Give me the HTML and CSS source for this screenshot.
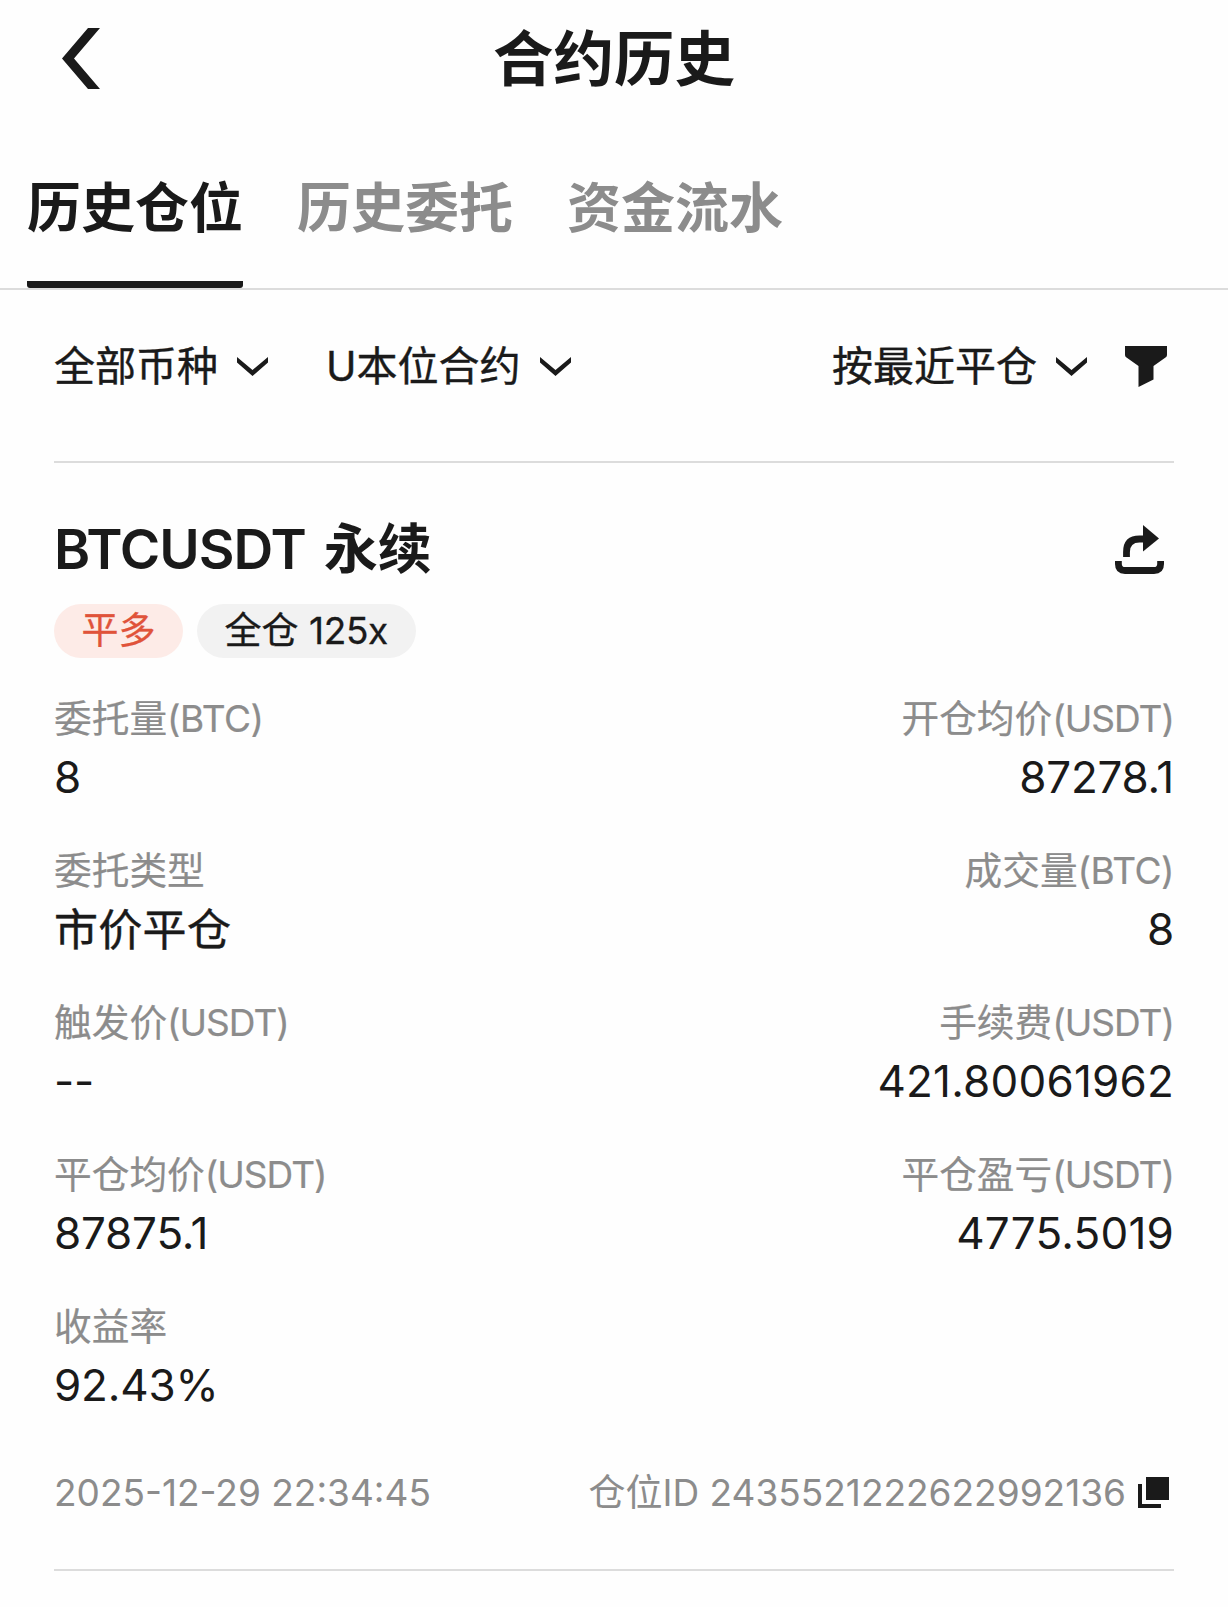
FILE: index.html
```html
<!DOCTYPE html>
<html lang="zh-CN">
<head>
    <meta charset="UTF-8">
    <meta name="viewport" content="width=device-width, initial-scale=1.0">
    <title>合约历史</title>
    <link rel="stylesheet" href="styles.css">
</head>
<body>
    <header class="header">
        <svg class="back" viewBox="0 0 38 61"><path d="M26 0H38L12 30.500 38 61H26L0 30.500Z"/></svg>
        <h1>合约历史</h1>
    </header>

    <nav class="tabs">
        <div class="tab active">历史仓位</div>
        <div class="tab">历史委托</div>
        <div class="tab">资金流水</div>
    </nav>

    <main class="content">
        <div class="filters">
            <div class="filter">
                <span>全部币种</span>
                <svg class="arrow" viewBox="0 0 31 19"><path d="M0 0L15.500 13 31 0V5.500L15.500 19 0 5.500Z"/></svg>
            </div>
            <div class="filter">
                <span>U本位合约</span>
                <svg class="arrow" viewBox="0 0 31 19"><path d="M0 0L15.500 13 31 0V5.500L15.500 19 0 5.500Z"/></svg>
            </div>
            <div class="filter sort">
                <span>按最近平仓</span>
                <svg class="arrow" viewBox="0 0 31 19"><path d="M0 0L15.500 13 31 0V5.500L15.500 19 0 5.500Z"/></svg>
            </div>
            <svg class="funnel" viewBox="0 0 42 41"><path d="M0 0H42V9Q42 10.500 40.500 11.500L28.500 20V33.500L13.500 41V20L1.500 11.500Q0 10.500 0 9Z"/></svg>
        </div>

        <section class="card">
            <div class="card-head">
                <h2><span class="symbol">BTCUSDT</span>永续</h2>
                <svg class="share" viewBox="0 0 49 49">
                    <path d="M11.500 32V27Q11.500 14 24.500 14H30" fill="none" stroke="currentColor" stroke-width="6.800"/>
                    <path d="M28 0L44 13.500 28 26.500Z"/>
                    <path d="M3.400 36V39Q3.400 45.500 10 45.500H39Q45.600 45.500 45.600 39V36" fill="none" stroke="currentColor" stroke-width="6.800"/>
                </svg>
            </div>
            <div class="badges">
                <span class="badge red">平多</span>
                <span class="badge">全仓 <span class="num">125x</span></span>
            </div>

            <div class="grid">
                <div class="item">
                    <div class="label">委托量<span class="unit">(BTC)</span></div>
                    <div class="value">8</div>
                </div>
                <div class="item right">
                    <div class="label">开仓均价<span class="unit usdt">(USDT)</span></div>
                    <div class="value">87278.1</div>
                </div>
                <div class="item">
                    <div class="label">委托类型</div>
                    <div class="value cn">市价平仓</div>
                </div>
                <div class="item right">
                    <div class="label">成交量<span class="unit">(BTC)</span></div>
                    <div class="value">8</div>
                </div>
                <div class="item">
                    <div class="label">触发价<span class="unit usdt">(USDT)</span></div>
                    <div class="value">--</div>
                </div>
                <div class="item right">
                    <div class="label">手续费<span class="unit usdt">(USDT)</span></div>
                    <div class="value wide">421.80061962</div>
                </div>
                <div class="item">
                    <div class="label">平仓均价<span class="unit usdt">(USDT)</span></div>
                    <div class="value">87875.1</div>
                </div>
                <div class="item right">
                    <div class="label">平仓盈亏<span class="unit usdt">(USDT)</span></div>
                    <div class="value wide">4775.5019</div>
                </div>
                <div class="item">
                    <div class="label">收益率</div>
                    <div class="value">92.43%</div>
                </div>
            </div>

            <div class="card-foot">
                <span class="time">2025-12-29 22:34:45</span>
                <span class="order">仓位ID 2435521222622992136</span>
                <svg class="copy" viewBox="0 0 31 31"><path d="M8 0H31V23H8ZM0 7H4V27H23V31H0Z"/></svg>
            </div>
        </section>
    </main>
</body>
</html>
```
FILE: styles.css
```css
* {
    box-sizing: border-box;
}
body {
    margin: 0;
    background: #fefefe;
    color: #1a1a1a;
    font-family: Inter, "Noto Sans CJK SC", sans-serif;
}
svg {
    display: block;
    flex: none;
    fill: currentColor;
}
h1, h2 {
    margin: 0;
}
.header {
    display: grid;
    grid-template-columns: 1fr auto 1fr;
    align-items: center;
    height: 117px;
    padding: 0 62px;
}
.back {
    width: 38px;
    height: 61px;
}
.header h1 {
    font-size: 60.500px;
    line-height: 80px;
    font-weight: 700;
}
.tabs {
    display: flex;
    gap: 54px;
    height: 173px;
    padding: 0 27px;
    border-bottom: 2px solid #dcdcdc;
}
.tab {
    height: 171px;
    padding-top: 52px;
    font-size: 54px;
    line-height: 80px;
    font-weight: 700;
    color: #8c8c8c;
}
.tab.active {
    color: #1a1a1a;
    border-bottom: 7px solid #1a1a1a;
    border-radius: 3px;
}
.content {
    padding: 0 54px;
}
.filters {
    display: flex;
    align-items: center;
    height: 173px;
    padding: 0 7px 19px 0;
    border-bottom: 2px solid #dcdcdc;
}
.filter {
    display: flex;
    align-items: center;
    gap: 19px;
    margin-right: 58px;
    font-size: 41px;
    line-height: 56px;
    -webkit-text-stroke: 0.400px;
}
.filter.sort {
    margin-left: auto;
    margin-right: 38px;
}
.arrow {
    width: 31px;
    height: 19px;
}
.funnel {
    width: 42px;
    height: 41px;
}
.card {
    border-bottom: 2px solid #dcdcdc;
}
.card-head {
    display: flex;
    justify-content: space-between;
    align-items: center;
    padding: 50px 10px 0 0;
}
.card-head h2 {
    font-size: 54px;
    line-height: 72px;
    font-weight: 700;
}
.symbol {
    margin-right: 18px;
    font-size: 55px;
    font-weight: 600;
    letter-spacing: -1px;
}
.share {
    width: 49px;
    height: 49px;
}
.badges {
    display: flex;
    gap: 14px;
    margin-top: 18px;
}
.badge {
    height: 54px;
    padding: 0 27.500px;
    border-radius: 27px;
    background: #f2f2f2;
    font-size: 37px;
    line-height: 53px;
    -webkit-text-stroke: 0.300px;
}
.badge.red {
    background: #fdebe7;
    color: #e0533a;
}
.num {
    letter-spacing: -0.300px;
}
.grid {
    display: grid;
    grid-template-columns: auto auto;
    justify-content: space-between;
    row-gap: 34px;
    margin-top: 32px;
}
.right {
    text-align: right;
}
.label {
    height: 57px;
    font-size: 37.700px;
    line-height: 56px;
    color: #8c8c8c;
    -webkit-text-stroke: 0.200px;
}
.unit {
    font-size: 37px;
    letter-spacing: -0.500px;
}
.unit.usdt {
    letter-spacing: -1px;
}
.value {
    height: 61px;
    font-size: 44px;
    line-height: 61px;
    letter-spacing: -0.200px;
}
.value.cn {
    line-height: 62px;
    letter-spacing: 0.300px;
    -webkit-text-stroke: 0.400px;
}
.value.wide {
    letter-spacing: 0.200px;
}
.card-foot {
    display: flex;
    align-items: center;
    height: 153px;
    padding-right: 5px;
    font-size: 37px;
    line-height: 50px;
    color: #8c8c8c;
}
.order {
    margin-left: auto;
}
.copy {
    width: 31px;
    height: 31px;
    margin-left: 12px;
    color: #1a1a1a;
}
```
